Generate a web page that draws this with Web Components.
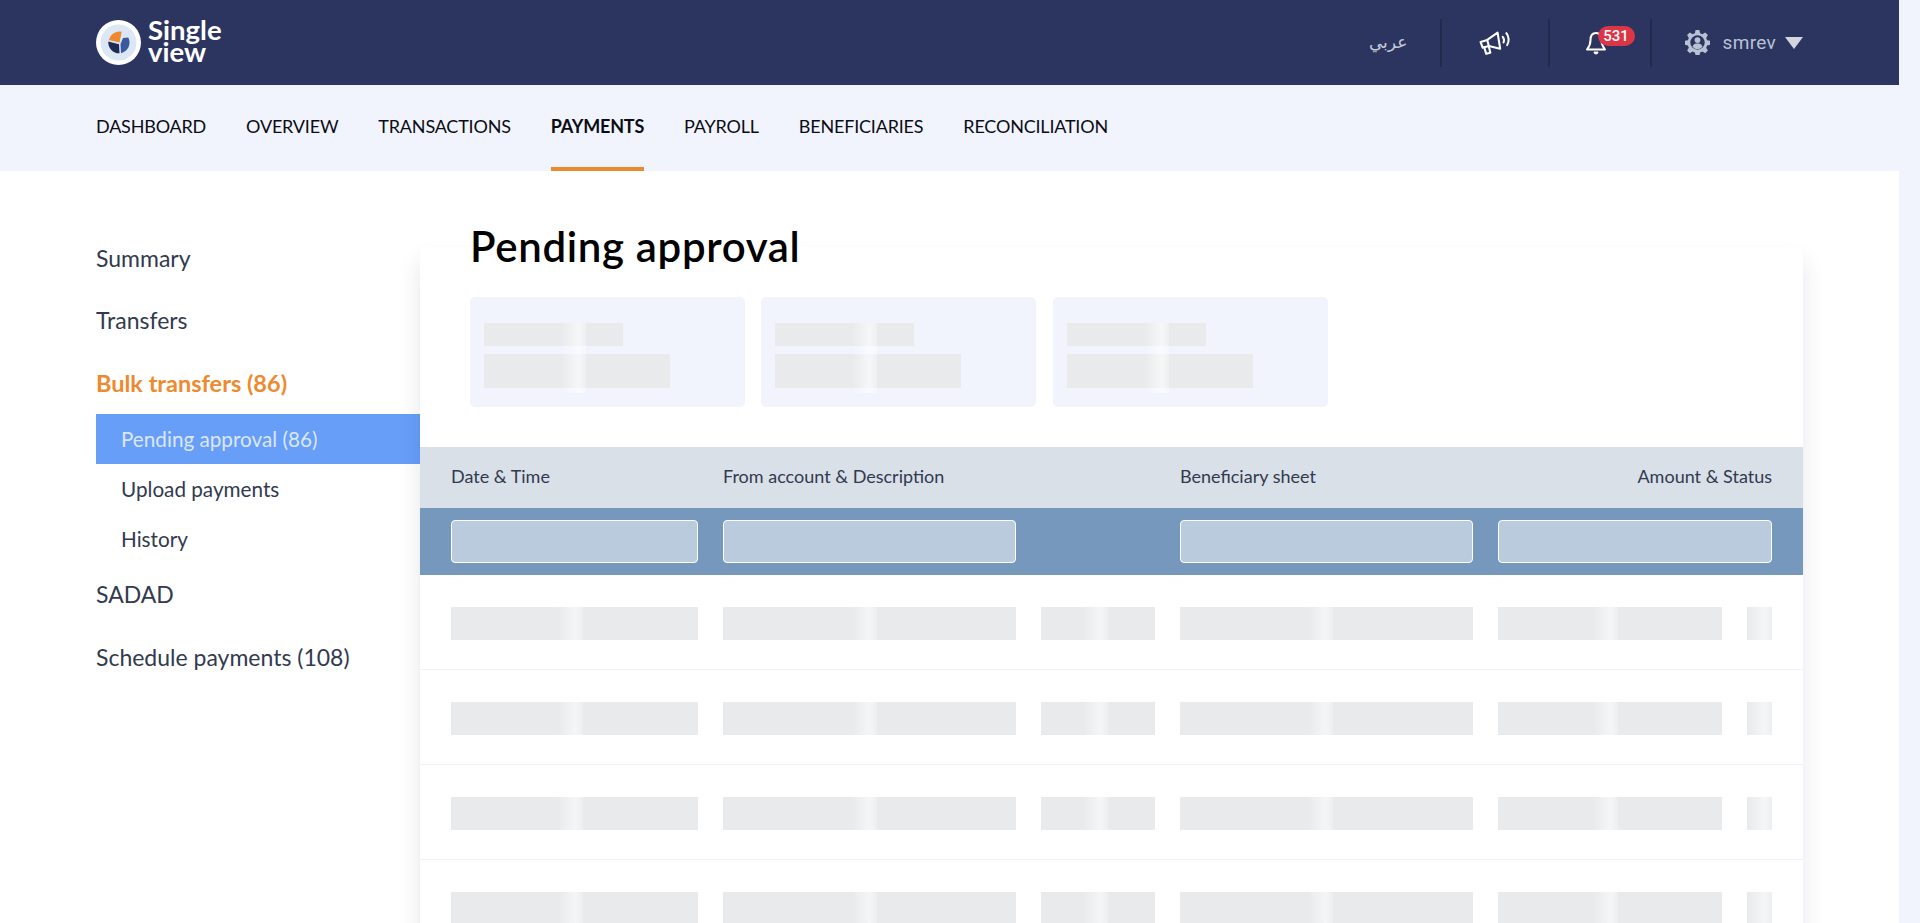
<!DOCTYPE html>
<html>
<head>
<meta charset="utf-8">
<title>Single view</title>
<style>
  html, body { margin: 0; height: 923px; overflow: hidden; background: #f1f4fd; }
  body { font-family: "Lato", "Liberation Sans", sans-serif; }
  sv-page { width: 1899px; height: 923px; }
</style>
</head>
<body>
<template id="skeleton-tpl">
  <style>
    :host { display: block; position: relative; background: #e9eaec; height: 33px; }
    .shine {
      position: absolute; top: 0; bottom: 0; width: 25px;
      background: linear-gradient(90deg, rgba(255,255,255,0), rgba(255,255,255,.55) 70%, rgba(255,255,255,.2));
    }
  </style>
  <div class="shine"></div>
</template>

<sv-page></sv-page>

<script>
class SvSkeleton extends HTMLElement {
    constructor() {
        super();
        this.attachShadow({ mode: 'open' });
        this.shadowRoot.appendChild(document.getElementById('skeleton-tpl').content.cloneNode(true));
    }
    connectedCallback() {
        const shine = this.shadowRoot.querySelector('.shine');
        if (this.hasAttribute('shine')) {
            shine.style.left = this.getAttribute('shine') + 'px';
        } else {
            shine.style.display = 'none';
        }
    }
}

class SvHeader extends HTMLElement {
    constructor() {
        super();
        this.attachShadow({ mode: 'open' });
        this.shadowRoot.innerHTML = `
            <style>
                :host { display: flex; align-items: center; justify-content: space-between; height: 85px; background: #2c355f; padding: 0 96px; box-sizing: border-box; }
                .logo { display: flex; align-items: center; gap: 6px; }
                .word { color: #fff; font: 700 27.500px/22px "Lato", sans-serif; padding-bottom: 3px; }
                .right { display: flex; align-items: center; height: 48px; color: #c5cbdb; }
                .sep { width: 2px; height: 48px; background: #232a50; }
                .ar { width: 108px; padding: 0 0 2px 5px; text-align: center; font: 17px "DejaVu Sans", "Noto Sans", sans-serif; box-sizing: border-box; }
                .mega { width: 106px; display: flex; justify-content: center; }
                .bell { width: 100px; position: relative; padding-left: 36px; box-sizing: border-box; display: flex; }
                .badge { position: absolute; left: 48px; top: -5px; width: 37px; height: 20px; border-radius: 10px; background: #dc3545; color: #fff; font: 500 15px/20px "Roboto", sans-serif; text-align: center; }
                .user { display: flex; align-items: center; padding-left: 33px; color: #b9c2d4; font: 19px "Roboto", sans-serif; letter-spacing: .3px; }
                .user span { margin: 0 9px 0 13px; }
                .caret { width: 0; height: 0; border: 9.5px solid transparent; border-top: 12px solid #d3d6de; border-bottom: 0; }
            </style>
            <div class="logo">
                <svg width="46" height="46" viewBox="0 0 46 46">
                    <circle cx="22.500" cy="22.500" r="22.500" fill="#fff"/>
                    <circle cx="22.500" cy="22.500" r="18" fill="#dbe7f5"/>
                    <path d="M12.800 20A11 11 0 0 1 25.700 11.700L23.500 22.500z" fill="#ee8a2d"/>
                    <path d="M12.300 21.500L23 24.200 23.500 33.300A11 11 0 0 1 12.300 21.500z" fill="#1f2a55"/>
                    <path d="M24.500 24L27 18 32.300 17.500A11 11 0 0 1 25 33.200z" fill="#3a5a9b"/>
                </svg>
                <div class="word"><div>Single</div><div>view</div></div>
            </div>
            <div class="right">
                <div class="ar" lang="ar">عربي</div>
                <div class="sep"></div>
                <div class="mega">
                    <svg width="32" height="26" viewBox="0 0 31 25" fill="none" stroke="#fff" stroke-width="2" stroke-linejoin="round" stroke-linecap="round">
                        <path d="M1.500 11.500L8 9.500 18 2.500 20.500 18 9.500 15.500 3.500 17z"/>
                        <path d="M8 9.500L9.500 15.500"/>
                        <path d="M5 16.500L7 23 11 22 9.500 16"/>
                        <path d="M23 6.500c1.200 1.500 1.500 3.500 .8 5.500M26.500 3c2.500 3 3 8 .8 11.500"/>
                    </svg>
                </div>
                <div class="sep"></div>
                <div class="bell">
                    <svg width="20" height="24" viewBox="0 0 20 24" fill="none" stroke="#fff" stroke-width="2" stroke-linejoin="round">
                        <path d="M10 2C6 2 4.500 5 4.500 9c0 4-1.500 7-3.500 9.500h18c-2-2.500-3.500-5.500-3.500-9.500 0-4-1.500-7-5.500-7z"/>
                        <path d="M8 21a2 2 0 0 0 4 0z" fill="#fff" stroke-width="1"/>
                    </svg>
                    <div class="badge">531</div>
                </div>
                <div class="sep"></div>
                <div class="user">
                    <svg width="25" height="25" viewBox="0 0 26 26">
                        <path fill="#b9c2d4" d="M11 0h4l.7 3.300 2.400 1 2.900-1.800 2.800 2.800-1.800 2.900 1 2.400 3 .7v4l-3 .7-1 2.400 1.800 2.900-2.800 2.800-2.900-1.800-2.400 1-.7 3.300h-4l-.7-3.300-2.400-1-2.900 1.800-2.800-2.800 1.800-2.900-1-2.400-3-.7v-4l3-.7 1-2.400-1.800-2.900 2.800-2.800 2.900 1.800 2.400-1z"/>
                        <circle cx="13" cy="13" r="7.500" fill="#2c355f"/>
                        <circle cx="13" cy="10.500" r="3" fill="#b9c2d4"/>
                        <path fill="#b9c2d4" d="M7.800 17.500c1-3 3-3.500 5.200-3.500s4.200.5 5.200 3.500c-1.500 1.500-3 2.500-5.200 2.500s-3.700-1-5.200-2.500z"/>
                    </svg>
                    <span>smrev</span>
                    <div class="caret"></div>
                </div>
            </div>
        `;
    }
}

class SvNav extends HTMLElement {
    constructor() {
        super();
        this.attachShadow({ mode: 'open' });
        const items = ['DASHBOARD', 'OVERVIEW', 'TRANSACTIONS', 'PAYMENTS', 'PAYROLL', 'BENEFICIARIES', 'RECONCILIATION'];
        this.shadowRoot.innerHTML = `
            <style>
                :host { display: flex; gap: 40px; height: 86px; background: #f1f4fd; padding: 0 96px; box-sizing: border-box; }
                a { display: block; padding-top: 30px; box-sizing: border-box; height: 86px; color: #0b0d14; font: 18px/22px "Lato", sans-serif; letter-spacing: -.2px; }
                a.on { font-weight: 700; border-bottom: 4px solid #ee8a2d; }
            </style>
            ${items.map(t => `<a class="${t === 'PAYMENTS' ? 'on' : ''}">${t}</a>`).join('')}
        `;
    }
}

class SvSide extends HTMLElement {
    constructor() {
        super();
        this.attachShadow({ mode: 'open' });
        this.shadowRoot.innerHTML = `
            <style>
                :host { display: block; width: 324px; flex: none; padding-top: 72px; color: #323a4f; }
                .top { font: 23px/30px "Lato", sans-serif; margin-bottom: 32px; height: 30px; }
                .top.mid { margin-bottom: 33px; }
                .top.on { color: #ee8a2d; font-size: 23.500px; font-weight: 700; margin-bottom: 16px; }
                .sub { font: 20.700px/50px "Lato", sans-serif; padding-left: 25px; }
                .sub.on { background: #679ef8; color: #dbe6f8; }
                .last { margin-bottom: 15px; }
            </style>
            <div class="top">Summary</div>
            <div class="top mid">Transfers</div>
            <div class="top on">Bulk transfers (86)</div>
            <div class="sub on">Pending approval (86)</div>
            <div class="sub">Upload payments</div>
            <div class="sub last">History</div>
            <div class="top mid">SADAD</div>
            <div class="top">Schedule payments (108)</div>
        `;
    }
}

class SvStat extends HTMLElement {
    constructor() {
        super();
        this.attachShadow({ mode: 'open' });
        this.shadowRoot.innerHTML = `
            <style>
                :host { display: block; position: relative; width: 275px; height: 110px; background: #f1f4fd; border-radius: 5px; padding: 26px 14px 0; box-sizing: border-box; }
                .a { width: 139px; height: 23px; margin-bottom: 8px; }
                .b { width: 186px; height: 34px; }
                .shine {
                    position: absolute; left: 91px; top: 26px; width: 25px; height: 70px;
                    background: linear-gradient(90deg, rgba(255,255,255,0), rgba(255,255,255,.6) 70%, rgba(255,255,255,.25));
                }
            </style>
            <sv-skeleton class="a"></sv-skeleton>
            <sv-skeleton class="b"></sv-skeleton>
            <div class="shine"></div>
        `;
    }
}

class SvRow extends HTMLElement {
    constructor() {
        super();
        this.attachShadow({ mode: 'open' });
        this.shadowRoot.innerHTML = `
            <style>
                :host { display: grid; grid-template-columns: 247px 293px 114px 293px 224px 25px; column-gap: 25px; height: 95px; padding: 32px 31px 0; box-sizing: border-box; border-bottom: 1px solid #f1f2f6; }
                sv-skeleton { height: 33px; }
            </style>
            <sv-skeleton shine="107"></sv-skeleton>
            <sv-skeleton shine="129"></sv-skeleton>
            <sv-skeleton shine="42"></sv-skeleton>
            <sv-skeleton shine="128"></sv-skeleton>
            <sv-skeleton shine="95"></sv-skeleton>
            <sv-skeleton shine="0"></sv-skeleton>
        `;
    }
}

class SvTable extends HTMLElement {
    constructor() {
        super();
        this.attachShadow({ mode: 'open' });
        this.shadowRoot.innerHTML = `
            <style>
                :host { display: block; }
                .head { display: grid; grid-template-columns: 272px 457px 318px 1fr; height: 61px; align-items: center; padding: 0 31px 3px; box-sizing: border-box; background: #d9e0e8; color: #323a4f; font: 18px "Lato", sans-serif; }
                .head div:last-child { text-align: right; }
                .filters { display: grid; grid-template-columns: 247px 293px 114px 293px 274px; column-gap: 25px; height: 67px; align-items: center; padding: 0 31px; background: #7698bd; }
                .filters i { display: block; height: 43px; background: #bacbdd; border: 1px solid #fff; border-radius: 4px; box-sizing: border-box; }
                .filters i:nth-child(3) { grid-column: 4; }
            </style>
            <div class="head"><div>Date &amp; Time</div><div>From account &amp; Description</div><div>Beneficiary sheet</div><div>Amount &amp; Status</div></div>
            <div class="filters"><i></i><i></i><i></i><i></i></div>
            <sv-row></sv-row><sv-row></sv-row><sv-row></sv-row><sv-row></sv-row>
        `;
    }
}

class SvPage extends HTMLElement {
    constructor() {
        super();
        this.attachShadow({ mode: 'open' });
        this.shadowRoot.innerHTML = `
            <style>
                :host { display: block; background: #fff; overflow: hidden; }
                .body { display: flex; padding: 0 96px; }
                main { flex: 1; position: relative; margin-top: 76px; min-width: 0; height: 700px; background: #fff; box-shadow: 0 14px 22px rgba(40,50,90,.12); border-radius: 6px 6px 0 0; }
                .title { position: absolute; left: 50px; top: -30px; margin: 0; color: #000; font: 600 42px/58px "Lato", sans-serif; letter-spacing: .65px; }
                .stats { display: flex; gap: 16px; padding: 50px 50px 40px; }
                .stats sv-stat:last-child { margin-left: 1px; }
            </style>
            <sv-header></sv-header>
            <sv-nav></sv-nav>
            <div class="body">
                <sv-side></sv-side>
                <main>
                    <h1 class="title">Pending approval</h1>
                    <div class="stats"><sv-stat></sv-stat><sv-stat></sv-stat><sv-stat></sv-stat></div>
                    <sv-table></sv-table>
                </main>
            </div>
        `;
    }
}

customElements.define('sv-skeleton', SvSkeleton);
customElements.define('sv-header', SvHeader);
customElements.define('sv-nav', SvNav);
customElements.define('sv-side', SvSide);
customElements.define('sv-stat', SvStat);
customElements.define('sv-row', SvRow);
customElements.define('sv-table', SvTable);
customElements.define('sv-page', SvPage);
</script>
</body>
</html>
